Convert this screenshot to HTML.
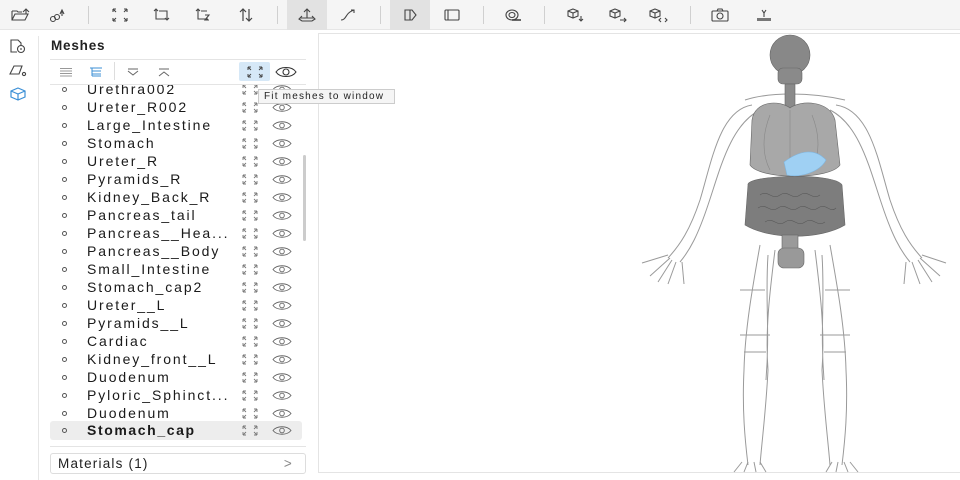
<!DOCTYPE html>
<html><head><meta charset="utf-8"><style>
*{margin:0;padding:0;box-sizing:border-box}
body{width:960px;height:480px;background:#fff;font-family:"Liberation Sans",sans-serif;position:relative;overflow:hidden;color:#222}
.tb{position:absolute;left:0;top:0;width:960px;height:30px;background:#f5f5f5;border-bottom:1px solid #e6e6e6}
.ti{position:absolute;top:0;width:40px;height:30px;display:flex;align-items:center;justify-content:center}
.ti.act{background:#e2e2e2}
.sep{position:absolute;top:6px;width:1px;height:18px;background:#d0d0d0}
svg{display:block}
.strip{position:absolute;left:38px;top:36px;width:1px;height:444px;background:#e6e6e6}
.li{position:absolute;left:8px}
h1{position:absolute;left:51px;top:38px;font-size:13.5px;font-weight:bold;letter-spacing:.8px}
.hl{position:absolute;left:50px;height:1px;width:256px;background:#e4e4e4}
.list{position:absolute;left:50px;top:85px;width:256px;height:355px;overflow:hidden}
.row{position:absolute;left:0;width:252px;height:18px;font-size:14px;letter-spacing:1.9px;line-height:18px;color:#1a1a1a}
.row.sel{background:#ededed;border-radius:3px;font-weight:bold;letter-spacing:1.6px}
.row .d{position:absolute;left:12px;top:7px;width:5px;height:5px;border:1px solid #555;border-radius:50%}
.row .n{position:absolute;left:37px;top:0;white-space:nowrap}
.row .f{position:absolute;left:191px;top:3px}
.row .e{position:absolute;left:222px;top:5px}
.vp{position:absolute;left:318px;top:33px;width:642px;height:440px;border-left:1px solid #e4e4e4;border-top:1px solid #e4e4e4;border-bottom:1px solid #e4e4e4}
.tip{position:absolute;left:258px;top:89px;width:137px;height:15px;background:#f5f5f5;border:1px solid #ccc;font-size:10px;line-height:13px;padding-left:5px;letter-spacing:1.2px;color:#222}
.mat{position:absolute;left:50px;top:453px;width:256px;height:21px;border:1px solid #ddd;border-radius:3px;font-size:13.5px;letter-spacing:1.2px;line-height:19px;padding-left:7px}
.mat span{position:absolute;right:12px;top:0;color:#888}
.sb{position:absolute;left:303px;top:155px;width:3px;height:86px;background:#ccc;border-radius:2px}
</style></head><body>
<div class="tb">
<div class="ti" style="left:0"><svg width="20" height="16" viewBox="0 0 20 16" fill="none" stroke="#444" stroke-width="1.1"><path d="M2 4v9h13l3-6H5l-3 6M2 4h5l1 1h4"/><path d="M13 5l3-3 3 3M16 2v5"/></svg></div>
<div class="ti" style="left:38px"><svg width="20" height="16" viewBox="0 0 20 16" fill="none" stroke="#444" stroke-width="1.1"><circle cx="5" cy="12" r="2.5"/><circle cx="9" cy="10" r="2.5"/><path d="M12 7l2-4 2 4M14 3v6"/></svg></div>
<div class="sep" style="left:88px"></div>
<div class="ti" style="left:100px"><svg width="18" height="16" viewBox="0 0 18 16" fill="none" stroke="#444" stroke-width="1.1"><path d="M2 2l3 3M2 2h3M2 2v3M16 2l-3 3M16 2h-3M16 2v3M2 14l3-3M2 14h3M2 14v-3M16 14l-3-3M16 14h-3M16 14v-3"/></svg></div>
<div class="ti" style="left:142px"><svg width="18" height="16" viewBox="0 0 18 16" fill="none" stroke="#444" stroke-width="1.1"><path d="M3 2v10h10M1 4l2-2 2 2M6 4h8v9M12 11l2 2 2-2"/></svg></div>
<div class="ti" style="left:184px"><svg width="18" height="16" viewBox="0 0 18 16" fill="none" stroke="#444" stroke-width="1.1"><path d="M3 2v10h10M1 4l2-2 2 2M6 4h6M10 8h4l-4 5h4"/></svg></div>
<div class="ti" style="left:226px"><svg width="18" height="16" viewBox="0 0 18 16" fill="none" stroke="#444" stroke-width="1.2"><path d="M6 2v12M3 5l3-3 3 3M12 2v12M9 11l3 3 3-3"/></svg></div>
<div class="sep" style="left:277px"></div>
<div class="ti act" style="left:287px"><svg width="20" height="16" viewBox="0 0 20 16" fill="none" stroke="#444" stroke-width="1.1"><path d="M10 2v9M7 5l3-3 3 3M3 11h14M5 9l-3 3 3 2h10l3-2-3-3"/></svg></div>
<div class="ti" style="left:328px"><svg width="20" height="16" viewBox="0 0 20 16" fill="none" stroke="#444" stroke-width="1.1"><path d="M3 13c3 0 4-2 6-5s4-4 7-5M13 3h3v3"/></svg></div>
<div class="sep" style="left:380px"></div>
<div class="ti act" style="left:390px"><svg width="20" height="16" viewBox="0 0 20 16" fill="none" stroke="#444" stroke-width="1.1"><path d="M5 3h7l4 5-4 5H5z"/><path d="M10 3v10"/></svg></div>
<div class="ti" style="left:432px"><svg width="20" height="16" viewBox="0 0 20 16" fill="none" stroke="#444" stroke-width="1.1"><rect x="3" y="3" width="14" height="10" rx="1"/><path d="M6 3v10"/></svg></div>
<div class="sep" style="left:483px"></div>
<div class="ti" style="left:494px"><svg width="22" height="16" viewBox="0 0 22 16" fill="none" stroke="#444" stroke-width="1.1"><ellipse cx="9" cy="8" rx="6" ry="5"/><ellipse cx="9" cy="8" rx="3" ry="2.5"/><path d="M9 13h9" stroke-width="1.6"/></svg></div>
<div class="sep" style="left:544px"></div>
<div class="ti" style="left:556px"><svg width="22" height="16" viewBox="0 0 22 16" fill="none" stroke="#444" stroke-width="1.1"><path d="M8 2l5 2v5l-5 2-5-2V4zM3 4l5 2 5-2M8 6v5M16 9v5M14 12l2 2 2-2"/></svg></div>
<div class="ti" style="left:598px"><svg width="22" height="16" viewBox="0 0 22 16" fill="none" stroke="#444" stroke-width="1.1"><path d="M8 2l5 2v5l-5 2-5-2V4zM3 4l5 2 5-2M8 6v5M13 13h6M17 11l2 2-2 2"/></svg></div>
<div class="ti" style="left:638px"><svg width="22" height="16" viewBox="0 0 22 16" fill="none" stroke="#444" stroke-width="1.1"><path d="M8 2l5 2v5l-5 2-5-2V4zM3 4l5 2 5-2M8 6v5M14 11l-2 2 2 2M18 11l2 2-2 2"/></svg></div>
<div class="sep" style="left:690px"></div>
<div class="ti" style="left:700px"><svg width="22" height="16" viewBox="0 0 22 16" fill="none" stroke="#444" stroke-width="1.1"><rect x="3" y="4" width="16" height="10" rx="1"/><circle cx="11" cy="9" r="3"/><path d="M8 4l1-2h4l1 2"/></svg></div>
<div class="ti" style="left:744px"><svg width="20" height="16" viewBox="0 0 20 16" fill="none" stroke="#444" stroke-width="1.1"><path d="M8 3l2 3 2-3M10 6v4"/><rect x="3" y="11" width="14" height="3" fill="#777" stroke="none"/></svg></div>
</div>

<div class="li" style="top:38px"><svg width="20" height="16" viewBox="0 0 20 16" fill="none" stroke="#444" stroke-width="1.1"><path d="M9 14H3V2h7l3 3v3"/><circle cx="13" cy="11" r="3.5"/><path d="M13 10v2"/></svg></div>
<div class="li" style="top:62px"><svg width="20" height="16" viewBox="0 0 20 16" fill="none" stroke="#444" stroke-width="1.1"><path d="M2 12l4-8h8l-3 8z"/><circle cx="16" cy="12" r="1.6"/></svg></div>
<div class="li" style="top:86px"><svg width="20" height="16" viewBox="0 0 20 16" fill="none" stroke="#3b8fd6" stroke-width="1.2"><path d="M10 2l7 3v6l-7 3-7-3V5zM3 5l7 3 7-3M10 8v6"/></svg></div>
<div class="strip"></div>

<h1>Meshes</h1>
<div class="hl" style="top:59px"></div>
<div style="position:absolute;left:58px;top:66px"><svg width="16" height="12" viewBox="0 0 16 12" stroke="#777" stroke-width=".8"><path d="M2 2.5h12M2 5h12M2 7.5h12M2 10h12"/></svg></div>
<div style="position:absolute;left:88px;top:66px"><svg width="16" height="12" viewBox="0 0 16 12" stroke="#3b8fd6" stroke-width="1" fill="none"><path d="M2 2h12M4 2v8M4 5h9M4 8h9M4 10h9"/></svg></div>
<div style="position:absolute;left:114px;top:62px;width:1px;height:18px;background:#ddd"></div>
<div style="position:absolute;left:125px;top:66px"><svg width="16" height="12" viewBox="0 0 16 12" stroke="#666" stroke-width="1" fill="none"><path d="M3 3h10M3 5l5 4 5-4"/></svg></div>
<div style="position:absolute;left:156px;top:66px"><svg width="16" height="12" viewBox="0 0 16 12" stroke="#666" stroke-width="1" fill="none"><path d="M3 3h10M3 10l5-4 5 4"/></svg></div>
<div style="position:absolute;left:239px;top:62px;width:31px;height:19px;background:#d6e8f7;border-radius:2px"></div>
<div style="position:absolute;left:246px;top:65px"><svg width="18" height="14" viewBox="0 0 18 14" fill="none" stroke="#444" stroke-width="1"><path d="M2 2l3 3M2 2h3M2 2v3M16 2l-3 3M16 2h-3M16 2v3M2 12l3-3M2 12h3M2 12v-3M16 12l-3-3M16 12h-3M16 12v-3"/></svg></div>
<div style="position:absolute;left:275px;top:66px"><svg width="22" height="12" viewBox="0 0 22 12" fill="none" stroke="#333" stroke-width="1.1"><path d="M1 6c4-6 16-6 20 0c-4 6-16 6-20 0z"/><circle cx="11" cy="6" r="3"/></svg></div>
<div class="hl" style="top:84px"></div>

<div class="list">
<div class="row" style="top:-5px"><i class="d"></i><span class="n">Urethra002</span></div>
<div class="row" style="top:13px"><i class="d"></i><span class="n">Ureter_R002</span></div>
<div class="row" style="top:31px"><i class="d"></i><span class="n">Large_Intestine</span></div>
<div class="row" style="top:49px"><i class="d"></i><span class="n">Stomach</span></div>
<div class="row" style="top:67px"><i class="d"></i><span class="n">Ureter_R</span></div>
<div class="row" style="top:85px"><i class="d"></i><span class="n">Pyramids_R</span></div>
<div class="row" style="top:103px"><i class="d"></i><span class="n">Kidney_Back_R</span></div>
<div class="row" style="top:121px"><i class="d"></i><span class="n">Pancreas_tail</span></div>
<div class="row" style="top:139px"><i class="d"></i><span class="n">Pancreas__Hea...</span></div>
<div class="row" style="top:157px"><i class="d"></i><span class="n">Pancreas__Body</span></div>
<div class="row" style="top:175px"><i class="d"></i><span class="n">Small_Intestine</span></div>
<div class="row" style="top:193px"><i class="d"></i><span class="n">Stomach_cap2</span></div>
<div class="row" style="top:211px"><i class="d"></i><span class="n">Ureter__L</span></div>
<div class="row" style="top:229px"><i class="d"></i><span class="n">Pyramids__L</span></div>
<div class="row" style="top:247px"><i class="d"></i><span class="n">Cardiac</span></div>
<div class="row" style="top:265px"><i class="d"></i><span class="n">Kidney_front__L</span></div>
<div class="row" style="top:283px"><i class="d"></i><span class="n">Duodenum</span></div>
<div class="row" style="top:301px"><i class="d"></i><span class="n">Pyloric_Sphinct...</span></div>
<div class="row" style="top:319px"><i class="d"></i><span class="n">Duodenum</span></div>
<div class="row sel" style="top:336px;height:19px"><i class="d"></i><span class="n">Stomach_cap</span></div>
</div>
<div class="sb"></div>
<div class="hl" style="top:446px"></div>
<div class="mat">Materials (1)<span>&gt;</span></div>

<div class="vp"></div>
<svg style="position:absolute;left:0;top:0" width="960" height="480" viewBox="0 0 960 480">
<g fill="none" stroke="#9a9a9a" stroke-width="1">
<path d="M752 105 C720 110 712 160 700 200 C690 230 680 245 668 258 M760 110 C730 125 720 170 708 205 C698 235 690 250 680 262 M745 100 C770 92 810 92 845 100"/>
<path d="M836 105 C870 110 878 160 890 200 C900 230 910 245 922 258 M830 110 C860 125 870 170 882 205 C892 235 900 250 910 262"/>
<path d="M668 255 l-26 8 M670 258 l-20 18 M676 262 l-8 22 M682 262 l2 22 M672 260 l-14 22"/>
<path d="M922 255 l24 8 M920 258 l20 18 M912 262 l8 22 M906 262 l-2 22 M918 260 l14 22"/>
<path d="M760 245 C752 290 745 330 744 370 C742 410 745 440 748 465 M775 250 C770 290 765 330 768 370 C766 410 762 440 760 465 M768 255 C765 300 770 330 766 380"/>
<path d="M830 245 C838 290 845 330 846 370 C848 410 845 440 842 465 M815 250 C820 290 825 330 822 370 C824 410 828 440 830 465 M822 255 C825 300 820 330 824 380"/>
<path d="M742 462 l-8 10 M748 462 l-4 10 M754 462 l2 10 M760 462 l6 10 M832 462 l-6 10 M838 462 l-2 10 M844 462 l4 10 M850 462 l8 10"/>
<path d="M740 335h30M820 335h30M744 352h22M824 352h22M740 290h25M825 290h25"/>
</g>
<g stroke="#666" stroke-width=".6">
<ellipse cx="790" cy="55" rx="20" ry="20" fill="#888"/>
<rect x="778" y="68" width="24" height="16" rx="5" fill="#8a8a8a"/>
<rect x="785" y="84" width="10" height="28" fill="#8a8a8a"/>
<path d="M752 120 C755 100 780 100 790 108 C800 100 830 100 835 120 L840 165 C830 180 760 180 750 165z" fill="#a8a8a8"/>
<path d="M790 110 v60 M770 115 c-8 20 -8 40 0 55 M812 115 c8 20 8 40 0 55" fill="none" stroke="#888"/>
<path d="M748 185 C745 175 835 172 842 185 L845 225 C820 240 770 240 745 225z" fill="#7d7d7d"/>
<path d="M760 195c8-6 12 6 20 0s12 6 20 0 12 6 20 0 M758 208c8-6 12 6 20 0s12 6 20 0 12 6 20 0 12 6 18 0 M765 222c8-6 12 6 20 0s12 6 20 0 12 6 20 0" fill="none" stroke="#5a5a5a"/>
<rect x="782" y="235" width="16" height="18" fill="#9a9a9a"/>
<rect x="778" y="248" width="26" height="20" rx="6" fill="#999"/>
</g>
<path d="M784 162 C800 150 815 148 826 160 C820 172 800 178 787 175z" fill="#9fd0f3" stroke="#7fb6e0" stroke-width=".6"/>
</svg>
<div class="tip">Fit meshes to window</div>
<script>
(function(){var rows=document.querySelectorAll('.row');rows.forEach(function(r){r.insertAdjacentHTML('beforeend','<span class="f"><svg width="18" height="13" viewBox="0 0 18 13" fill="none" stroke="#777" stroke-width=".9"><path d="M2 2l3 3M2 2h3M2 2v3M16 2l-3 3M16 2h-3M16 2v3M2 11l3-3M2 11h3M2 11v-3M16 11l-3-3M16 11h-3M16 11v-3"/></svg></span><span class="e"><svg width="20" height="9" viewBox="0 0 20 9" fill="none" stroke="#666" stroke-width=".9"><path d="M1 4.5c4-5 14-5 18 0c-4 5-14 5-18 0z"/><circle cx="10" cy="4.5" r="2.3"/></svg></span>');});})();
</script>
</body></html>
